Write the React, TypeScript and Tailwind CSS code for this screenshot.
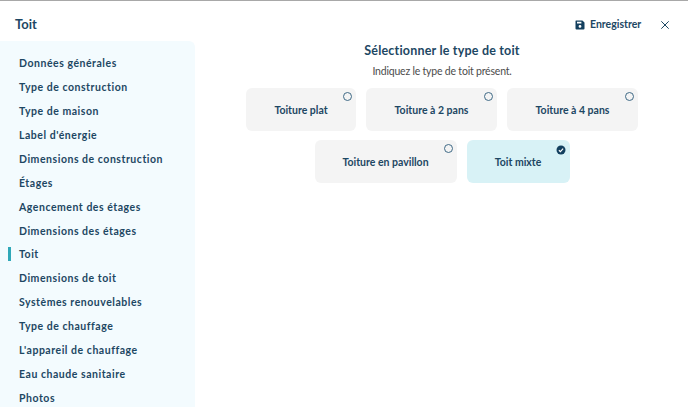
const menu = [
  "Données générales",
  "Type de construction",
  "Type de maison",
  "Label d'énergie",
  "Dimensions de construction",
  "Étages",
  "Agencement des étages",
  "Dimensions des étages",
  "Toit",
  "Dimensions de toit",
  "Systèmes renouvelables",
  "Type de chauffage",
  "L'appareil de chauffage",
  "Eau chaude sanitaire",
  "Photos",
]

function Radio({ checked }: { checked?: boolean }) {
  if (checked) {
    return (
      <svg className="absolute top-[5px] right-[4px] w-[10px] h-[10px]" viewBox="0 0 10 10">
        <circle cx="5" cy="5" r="4.5" fill="#123f5e" />
        <path d="M2.9 5.2 L4.4 6.6 L7.1 3.7" fill="none" stroke="#ffffff" strokeWidth="1.2" />
      </svg>
    )
  }
  return <span className="absolute top-[4px] right-[4px] w-[9px] h-[9px] rounded-full border border-[#3f6a86]" />
}

function Option({ label, width, checked }: { label: string; width: string; checked?: boolean }) {
  return (
    <div
      className={`relative h-[43px] pt-[2px] rounded-md flex items-center justify-center text-[10.5px] font-bold text-[#1d4763] ${width} ${
        checked ? "bg-[#d8f2f6]" : "bg-[#f4f4f4]"
      }`}
    >
      {label}
      <Radio checked={checked} />
    </div>
  )
}

export default function App() {
  return (
    <div className="w-[688px] h-[407px] overflow-hidden bg-white flex flex-col border-t border-[#a8a8a8] font-['Lato',sans-serif]">
      <header className="h-[40px] shrink-0 flex items-center justify-between pl-[15px] pr-[19px] pt-[7px]">
        <span className="text-[13px] font-bold text-[#1d4763]">Toit</span>
        <span className="flex items-center">
          <svg className="w-[10px] h-[10px]" viewBox="0 0 10 10">
            <path
              fillRule="evenodd"
              d="M1 0.5 H7.4 L9.5 2.6 V8.5 A1 1 0 0 1 8.5 9.5 H1.5 A1 1 0 0 1 0.5 8.5 V1 A0.5 0.5 0 0 1 1 0.5 Z M2 1.8 V3.6 H6.4 V1.8 Z M5 5 A1.4 1.4 0 1 0 5 7.8 A1.4 1.4 0 1 0 5 5 Z"
              fill="#123f5e"
            />
          </svg>
          <span className="ml-[5px] w-[51px] text-[10.5px] font-bold text-[#1d4763] whitespace-nowrap">Enregistrer</span>
          <svg className="ml-[20px] w-[8px] h-[8px]" viewBox="0 0 8 8">
            <path d="M0.3 0.3 L7.7 7.7 M7.7 0.3 L0.3 7.7" stroke="#1d4763" strokeWidth="1" />
          </svg>
        </span>
      </header>
      <div className="flex flex-1 min-h-0">
        <nav className="w-[195px] shrink-0 bg-[#f3fbfe] rounded-tr-md pt-[11px]">
          {menu.map((item) => (
            <div
              key={item}
              className="relative h-[23.93px] flex items-center pl-[19px] text-[10.5px] font-bold text-[#1d4763] tracking-[0.53px] whitespace-nowrap"
            >
              {item === "Toit" && <span className="absolute left-[8px] top-[4px] w-[3px] h-[14px] bg-[#2fa8b8]" />}
              {item}
            </div>
          ))}
        </nav>
        <main className="flex-1 flex flex-col items-center pt-[1px] pl-[1px]">
          <h1 className="h-[18px] flex items-center text-[12.5px] font-bold text-[#1d4763] tracking-[0.2px]">
            Sélectionner le type de toit
          </h1>
          <p className="mt-[4px] h-[16px] flex items-center text-[10.5px] tracking-[-0.2px] text-[#4c4c4c]">
            Indiquez le type de toit présent.
          </p>
          <div className="mt-[8px] flex gap-[10px]">
            <Option label="Toiture plat" width="w-[110px]" />
            <Option label="Toiture à 2 pans" width="w-[131px]" />
            <Option label="Toiture à 4 pans" width="w-[131px]" />
          </div>
          <div className="mt-[9px] flex gap-[10px]">
            <Option label="Toiture en pavillon" width="w-[142px]" />
            <Option label="Toit mixte" width="w-[103px]" checked />
          </div>
        </main>
      </div>
    </div>
  )
}
